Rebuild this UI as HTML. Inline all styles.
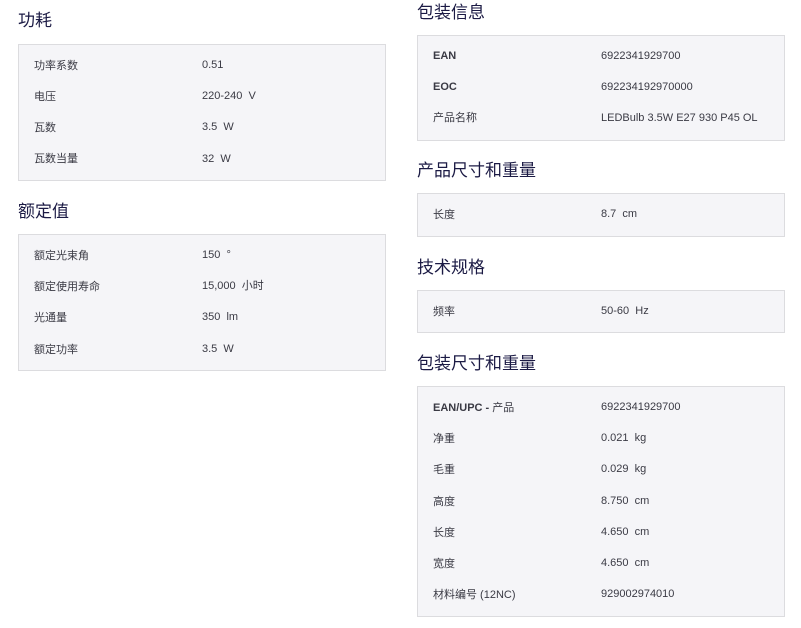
<!DOCTYPE html><html><head><meta charset="utf-8"><style>
body{margin:0;width:801px;height:628px;background:#fff;font-family:"Liberation Sans","Noto Sans CJK SC",sans-serif;position:relative;overflow:hidden}
.t{position:absolute;font-size:17px;color:#1b1a44;line-height:20px}
.b{position:absolute;background:#f5f5f8;border:1px solid #dcdcdf;box-sizing:border-box}
.r{position:absolute;font-size:11px;color:#3a3a44;line-height:14px;white-space:nowrap}
.bold{font-weight:bold}
</style></head><body>
<div class="t" style="left:18px;top:11px">功耗</div>
<div class="b" style="left:18px;top:44px;width:368px;height:137px"></div>
<div class="r" style="left:34px;top:59px">功率系数</div><div class="r" style="left:202px;top:58px">0.51</div>
<div class="r" style="left:34px;top:90px">电压</div><div class="r" style="left:202px;top:89px">220-240&nbsp; V</div>
<div class="r" style="left:34px;top:121px">瓦数</div><div class="r" style="left:202px;top:120px">3.5&nbsp; W</div>
<div class="r" style="left:34px;top:152px">瓦数当量</div><div class="r" style="left:202px;top:152px">32&nbsp; W</div>

<div class="t" style="left:18px;top:202px">额定值</div>
<div class="b" style="left:18px;top:234px;width:368px;height:137px"></div>
<div class="r" style="left:34px;top:249px">额定光束角</div><div class="r" style="left:202px;top:248px">150&nbsp; °</div>
<div class="r" style="left:34px;top:280px">额定使用寿命</div><div class="r" style="left:202px;top:279px">15,000&nbsp; 小时</div>
<div class="r" style="left:34px;top:311px">光通量</div><div class="r" style="left:202px;top:310px">350&nbsp; lm</div>
<div class="r" style="left:34px;top:343px">额定功率</div><div class="r" style="left:202px;top:342px">3.5&nbsp; W</div>

<div class="t" style="left:417px;top:3px">包装信息</div>
<div class="b" style="left:417px;top:35px;width:368px;height:106px"></div>
<div class="r bold" style="left:433px;top:49px">EAN</div><div class="r" style="left:601px;top:49px">6922341929700</div>
<div class="r bold" style="left:433px;top:80px">EOC</div><div class="r" style="left:601px;top:80px">692234192970000</div>
<div class="r" style="left:433px;top:111px">产品名称</div><div class="r" style="left:601px;top:111px">LEDBulb 3.5W E27 930 P45 OL</div>

<div class="t" style="left:417px;top:161px">产品尺寸和重量</div>
<div class="b" style="left:417px;top:193px;width:368px;height:44px"></div>
<div class="r" style="left:433px;top:208px">长度</div><div class="r" style="left:601px;top:207px">8.7&nbsp; cm</div>

<div class="t" style="left:417px;top:258px">技术规格</div>
<div class="b" style="left:417px;top:290px;width:368px;height:43px"></div>
<div class="r" style="left:433px;top:305px">频率</div><div class="r" style="left:601px;top:304px">50-60&nbsp; Hz</div>

<div class="t" style="left:417px;top:354px">包装尺寸和重量</div>
<div class="b" style="left:417px;top:386px;width:368px;height:231px"></div>
<div class="r bold" style="left:433px;top:401px">EAN/UPC - <span style="font-weight:normal">产品</span></div><div class="r" style="left:601px;top:400px">6922341929700</div>
<div class="r" style="left:433px;top:432px">净重</div><div class="r" style="left:601px;top:431px">0.021&nbsp; kg</div>
<div class="r" style="left:433px;top:463px">毛重</div><div class="r" style="left:601px;top:462px">0.029&nbsp; kg</div>
<div class="r" style="left:433px;top:495px">高度</div><div class="r" style="left:601px;top:494px">8.750&nbsp; cm</div>
<div class="r" style="left:433px;top:526px">长度</div><div class="r" style="left:601px;top:525px">4.650&nbsp; cm</div>
<div class="r" style="left:433px;top:557px">宽度</div><div class="r" style="left:601px;top:556px">4.650&nbsp; cm</div>
<div class="r" style="left:433px;top:588px">材料编号 (12NC)</div><div class="r" style="left:601px;top:587px">929002974010</div>
</body></html>
